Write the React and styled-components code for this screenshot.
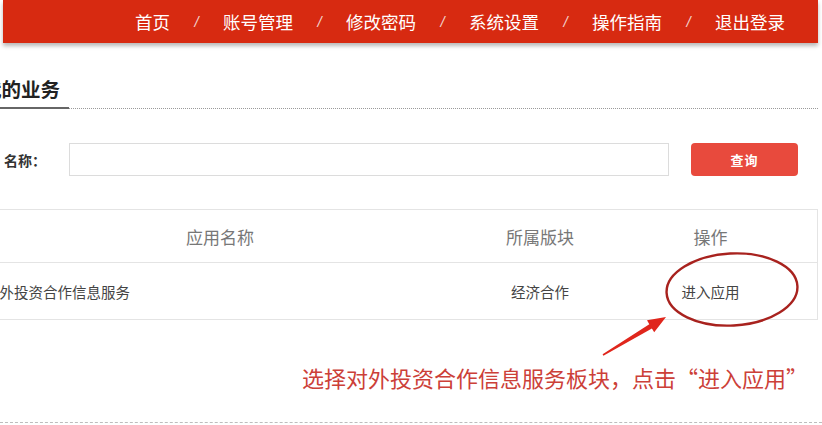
import React from "react";
import styled, { createGlobalStyle } from "styled-components";

const Global = createGlobalStyle`
  html, body { margin: 0; padding: 0; background: #fff; overflow: hidden; }
  body { font-family: "Noto Sans CJK SC", "Microsoft YaHei", sans-serif; }
`;

const Page = styled.div`
  position: relative;
  width: 822px;
  height: 425px;
  overflow: hidden;
  background: #fff;
`;

const NavBar = styled.nav`
  margin: 0 4px 0 3px;
  height: 43px;
  background: #d72a11;
  box-shadow: 0 3px 4px rgba(0, 0, 0, 0.28);
  display: flex;
  justify-content: flex-end;
  align-items: center;
  padding-right: 33px;
  box-sizing: border-box;
`;

const NavItem = styled.a`
  color: #fff;
  font-size: 17.5px;
  line-height: 20px;
  text-decoration: none;
  white-space: nowrap;
`;

const NavSep = styled.span`
  color: #f3d2cc;
  font-family: "Liberation Sans", sans-serif;
  font-size: 15px;
  width: 53px;
  text-align: center;
  font-style: italic;
`;

const Main = styled.main`
  margin-left: -20px;
  width: 838px;
`;

const SectionHeader = styled.div`
  margin-top: 35px;
  border-bottom: 1px dotted #9a9a9a;
  height: 30px;
  display: flex;
  align-items: flex-start;
`;

const Title = styled.h2`
  margin: 0 0 -1px;
  padding: 0 9px 0 2px;
  font-size: 19.5px;
  line-height: 21px;
  font-weight: 700;
  color: #222;
  height: 29px;
  border-bottom: 2px solid #666;
`;

const SearchRow = styled.div`
  margin-top: 34px;
  display: flex;
  align-items: center;
  padding-left: 24px;
`;

const Label = styled.label`
  font-size: 14px;
  font-weight: 700;
  color: #333;
  width: 65px;
`;

const Input = styled.input`
  width: 600px;
  height: 33px;
  box-sizing: border-box;
  border: 1px solid #dcdcdc;
  outline: none;
  padding: 0 8px;
`;

const Button = styled.button`
  margin-left: 22px;
  width: 107px;
  height: 33px;
  border: none;
  border-radius: 4px;
  background: #e84a3d;
  color: #fff;
  font-family: inherit;
  font-size: 13px;
  font-weight: 700;
  letter-spacing: 1px;
`;

const Table = styled.div`
  margin-top: 33px;
  border: 1px solid #e4e4e4;
  border-left: none;
`;

const Row = styled.div`
  display: grid;
  grid-template-columns: 480px 160px 1fr;
  height: ${(p) => p.$h}px;
  align-items: center;
  border-top: ${(p) => (p.$first ? "none" : "1px solid #e4e4e4")};
`;

const HeadCell = styled.div`
  text-align: center;
  font-size: 17px;
  color: #777;
  padding-right: ${(p) => (p.$last ? 16 : 0)}px;
`;

const Cell = styled.div`
  font-size: 14.5px;
  color: #444;
  text-align: ${(p) => p.$align || "center"};
  padding-left: ${(p) => p.$pl || 0}px;
  padding-right: ${(p) => p.$pr || 0}px;
`;

const Note = styled.p`
  margin: 42px 0 0;
  padding-left: 322px;
  font-size: 22px;
  line-height: 30px;
  color: #cc4038;
  white-space: nowrap;
`;

const Footer = styled.div`
  position: absolute;
  left: 0;
  right: 0;
  top: 422px;
  border-top: 1px dashed #bdbdbd;
`;

const Overlay = styled.svg`
  position: absolute;
  left: 0;
  top: 0;
  pointer-events: none;
`;

const navItems = ["首页", "账号管理", "修改密码", "系统设置", "操作指南", "退出登录"];

export default function App() {
  return (
    <Page>
      <Global />
      <NavBar>
        {navItems.map((t, i) => (
          <React.Fragment key={t}>
            {i > 0 && <NavSep>/</NavSep>}
            <NavItem href="#">{t}</NavItem>
          </React.Fragment>
        ))}
      </NavBar>
      <Main>
        <SectionHeader>
          <Title>我的业务</Title>
        </SectionHeader>
        <SearchRow>
          <Label>名称：</Label>
          <Input />
          <Button>查询</Button>
        </SearchRow>
        <Table>
          <Row $h={52} $first>
            <HeadCell>应用名称</HeadCell>
            <HeadCell>所属版块</HeadCell>
            <HeadCell $last>操作</HeadCell>
          </Row>
          <Row $h={56}>
            <Cell $align="left" $pl={5}>对外投资合作信息服务</Cell>
            <Cell>经济合作</Cell>
            <Cell $pr={16}>进入应用</Cell>
          </Row>
        </Table>
        <Note>选择对外投资合作信息服务板块，点击“进入应用”</Note>
      </Main>
      <Footer />
      <Overlay width="822" height="425" viewBox="0 0 822 425">
        <ellipse cx="732" cy="289.5" rx="65.5" ry="36" fill="none" stroke="#a8221e" strokeWidth="2.4" transform="rotate(-3 732 289.5)" />
        <polygon
          points="602.6,354.3 649.3,324.2 647,320.3 666,317 654.2,332.3 651.9,328.4 603.4,355.7"
          fill="#e0261c"
        />
      </Overlay>
    </Page>
  );
}
